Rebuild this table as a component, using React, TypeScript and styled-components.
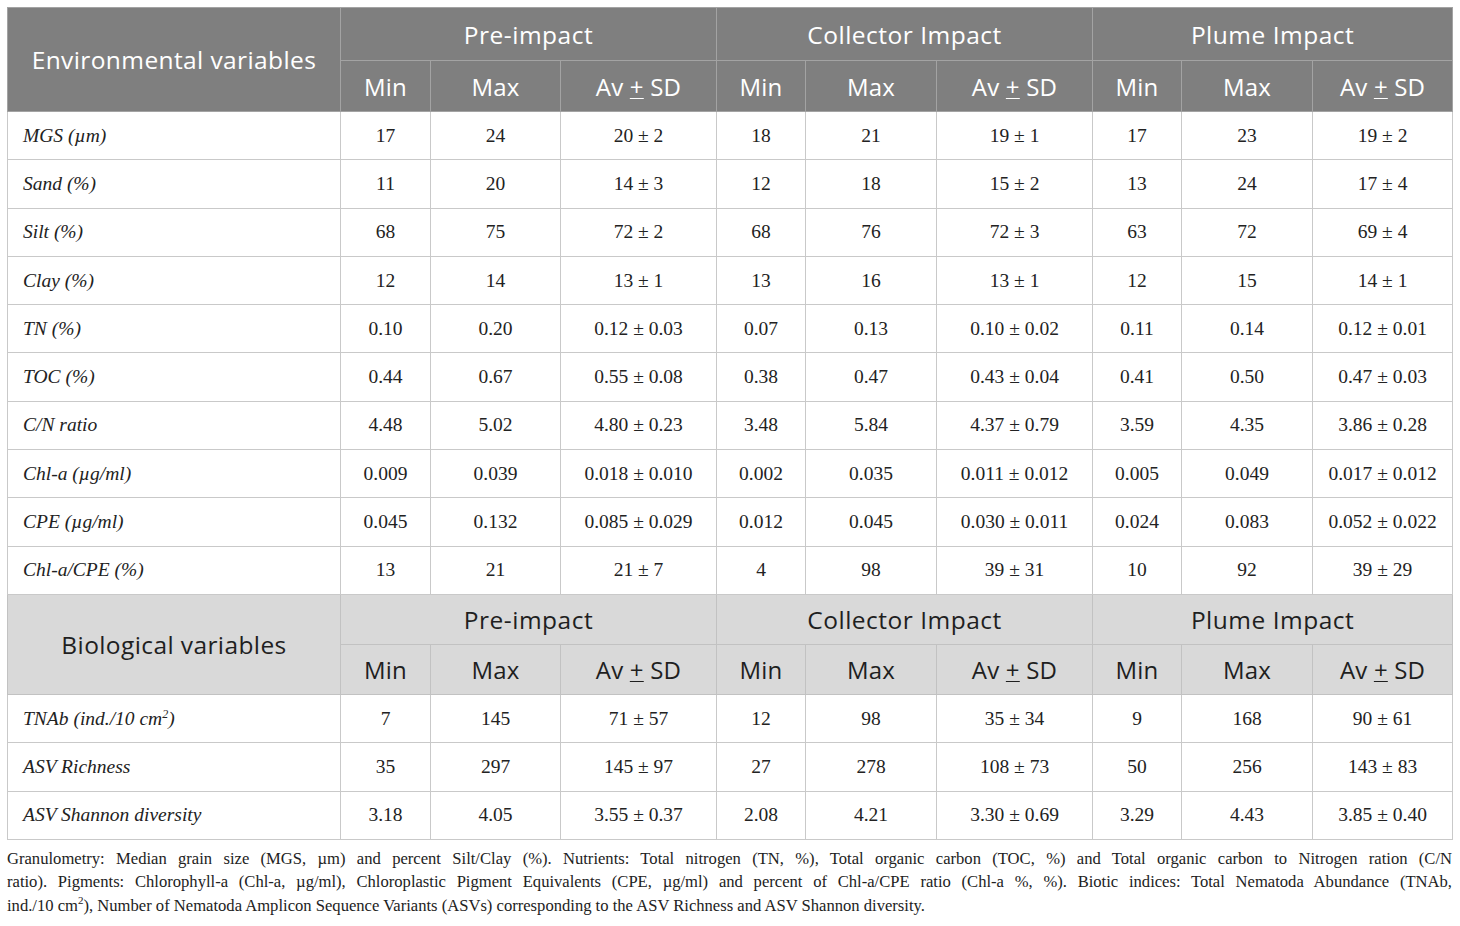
import styled, { createGlobalStyle } from "styled-components";

const GlobalStyle = createGlobalStyle`
  html, body {
    margin: 0;
    padding: 0;
    background: #ffffff;
  }
`;

const Page = styled.div`
  padding: 7px 8px 0 7px;
  width: 1445px;
`;

const Table = styled.table`
  border-collapse: collapse;
  width: 1445px;
  table-layout: fixed;
  border: 1px solid #c9c9c9;
`;

const HeadCell = styled.th<{ $light?: boolean; $tall?: boolean }>`
  background: ${(p) => (p.$light ? "#d9d9d9" : "#7f7f7f")};
  color: ${(p) => (p.$light ? "#1f1f1f" : "#ffffff")};
  border: 1px solid ${(p) => (p.$light ? "#c2c2c2" : "#a3a3a3")};
  font-family: "Open Sans", Lato, sans-serif;
  font-weight: 400;
  font-size: ${(p) => (p.$tall ? "24.5px" : "24.5px")};
  letter-spacing: ${(p) => (p.$tall ? "0.4px" : "0.5px")};
  text-align: center;
  padding: 0;
  white-space: nowrap;
`;

const SubHead = styled(HeadCell)`
  font-size: 24px;
  letter-spacing: 0.2px;
`;

const PlusMinus = styled.span`
  text-decoration: underline;
  text-decoration-thickness: 1px;
  text-underline-offset: 2px;
`;

const HeadRow = styled.tr<{ $h: number }>`
  height: ${(p) => p.$h}px;
`;

const DataRow = styled.tr`
  height: 48.3px;
`;

const Cell = styled.td`
  border: 1px solid #c9c9c9;
  font-family: "Liberation Serif", "Times New Roman", serif;
  font-size: 19.5px;
  color: #222222;
  text-align: center;
  padding: 0;
  white-space: nowrap;
`;

const LabelCell = styled(Cell)`
  text-align: left;
  font-style: italic;
  padding-left: 15px;
`;

const Caption = styled.div`
  margin-top: 7px;
  font-family: "Liberation Serif", "Times New Roman", serif;
  font-size: 16.6px;
  line-height: 23.5px;
  color: #222222;
`;

const CaptionLine = styled.span<{ $last?: boolean }>`
  display: block;
  white-space: nowrap;
  text-align: justify;
  text-align-last: ${(p) => (p.$last ? "left" : "justify")};
`;

const Sup = styled.sup<{ $size: number }>`
  font-size: ${(p) => p.$size}px;
  line-height: 0;
`;

const cols = [333, 90, 130, 156, 89, 131, 156, 89, 131, 140];
const groups = ["Pre-impact", "Collector Impact", "Plume Impact"];

type Row = { label: React.ReactNode; values: string[] };

const envRows: Row[] = [
  { label: "MGS (µm)", values: ["17", "24", "20 ± 2", "18", "21", "19 ± 1", "17", "23", "19 ± 2"] },
  { label: "Sand (%)", values: ["11", "20", "14 ± 3", "12", "18", "15 ± 2", "13", "24", "17 ± 4"] },
  { label: "Silt (%)", values: ["68", "75", "72 ± 2", "68", "76", "72 ± 3", "63", "72", "69 ± 4"] },
  { label: "Clay (%)", values: ["12", "14", "13 ± 1", "13", "16", "13 ± 1", "12", "15", "14 ± 1"] },
  { label: "TN (%)", values: ["0.10", "0.20", "0.12 ± 0.03", "0.07", "0.13", "0.10 ± 0.02", "0.11", "0.14", "0.12 ± 0.01"] },
  { label: "TOC (%)", values: ["0.44", "0.67", "0.55 ± 0.08", "0.38", "0.47", "0.43 ± 0.04", "0.41", "0.50", "0.47 ± 0.03"] },
  { label: "C/N ratio", values: ["4.48", "5.02", "4.80 ± 0.23", "3.48", "5.84", "4.37 ± 0.79", "3.59", "4.35", "3.86 ± 0.28"] },
  { label: "Chl-a (µg/ml)", values: ["0.009", "0.039", "0.018 ± 0.010", "0.002", "0.035", "0.011 ± 0.012", "0.005", "0.049", "0.017 ± 0.012"] },
  { label: "CPE (µg/ml)", values: ["0.045", "0.132", "0.085 ± 0.029", "0.012", "0.045", "0.030 ± 0.011", "0.024", "0.083", "0.052 ± 0.022"] },
  { label: "Chl-a/CPE (%)", values: ["13", "21", "21 ± 7", "4", "98", "39 ± 31", "10", "92", "39 ± 29"] },
];

const bioRows: Row[] = [
  {
    label: (
      <>
        TNAb (ind./10 cm<Sup $size={12}>2</Sup>)
      </>
    ),
    values: ["7", "145", "71 ± 57", "12", "98", "35 ± 34", "9", "168", "90 ± 61"],
  },
  { label: "ASV Richness", values: ["35", "297", "145 ± 97", "27", "278", "108 ± 73", "50", "256", "143 ± 83"] },
  { label: "ASV Shannon diversity", values: ["3.18", "4.05", "3.55 ± 0.37", "2.08", "4.21", "3.30 ± 0.69", "3.29", "4.43", "3.85 ± 0.40"] },
];

function Header({ title, light, h1, h2 }: { title: string; light?: boolean; h1: number; h2: number }) {
  return (
    <>
      <HeadRow $h={h1}>
        <HeadCell $light={light} $tall rowSpan={2}>
          {title}
        </HeadCell>
        {groups.map((g) => (
          <HeadCell key={g} $light={light} colSpan={3}>
            {g}
          </HeadCell>
        ))}
      </HeadRow>
      <HeadRow $h={h2}>
        {groups.flatMap((g) => [
          <SubHead key={g + "min"} $light={light}>Min</SubHead>,
          <SubHead key={g + "max"} $light={light}>Max</SubHead>,
          <SubHead key={g + "av"} $light={light}>
            Av <PlusMinus>+</PlusMinus> SD
          </SubHead>,
        ])}
      </HeadRow>
    </>
  );
}

function Rows({ rows }: { rows: Row[] }) {
  return (
    <>
      {rows.map((r, i) => (
        <DataRow key={i}>
          <LabelCell>{r.label}</LabelCell>
          {r.values.map((v, j) => (
            <Cell key={j}>{v}</Cell>
          ))}
        </DataRow>
      ))}
    </>
  );
}

export default function App() {
  return (
    <Page>
      <GlobalStyle />
      <Table>
        <colgroup>
          {cols.map((w, i) => (
            <col key={i} style={{ width: w }} />
          ))}
        </colgroup>
        <tbody>
          <Header title="Environmental variables" h1={53} h2={51} />
          <Rows rows={envRows} />
          <Header title="Biological variables" light h1={50} h2={50} />
          <Rows rows={bioRows} />
        </tbody>
      </Table>
      <Caption>
        <CaptionLine>
          Granulometry: Median grain size (MGS, µm) and percent Silt/Clay (%). Nutrients: Total nitrogen (TN, %), Total
          organic carbon (TOC, %) and Total organic carbon to Nitrogen ration (C/N
        </CaptionLine>
        <CaptionLine>
          ratio). Pigments: Chlorophyll-a (Chl-a, µg/ml), Chloroplastic Pigment Equivalents (CPE, µg/ml) and percent of
          Chl-a/CPE ratio (Chl-a %, %). Biotic indices: Total Nematoda Abundance (TNAb,
        </CaptionLine>
        <CaptionLine $last>
          ind./10 cm<Sup $size={11}>2</Sup>), Number of Nematoda Amplicon Sequence Variants (ASVs) corresponding to the
          ASV Richness and ASV Shannon diversity.
        </CaptionLine>
      </Caption>
    </Page>
  );
}
